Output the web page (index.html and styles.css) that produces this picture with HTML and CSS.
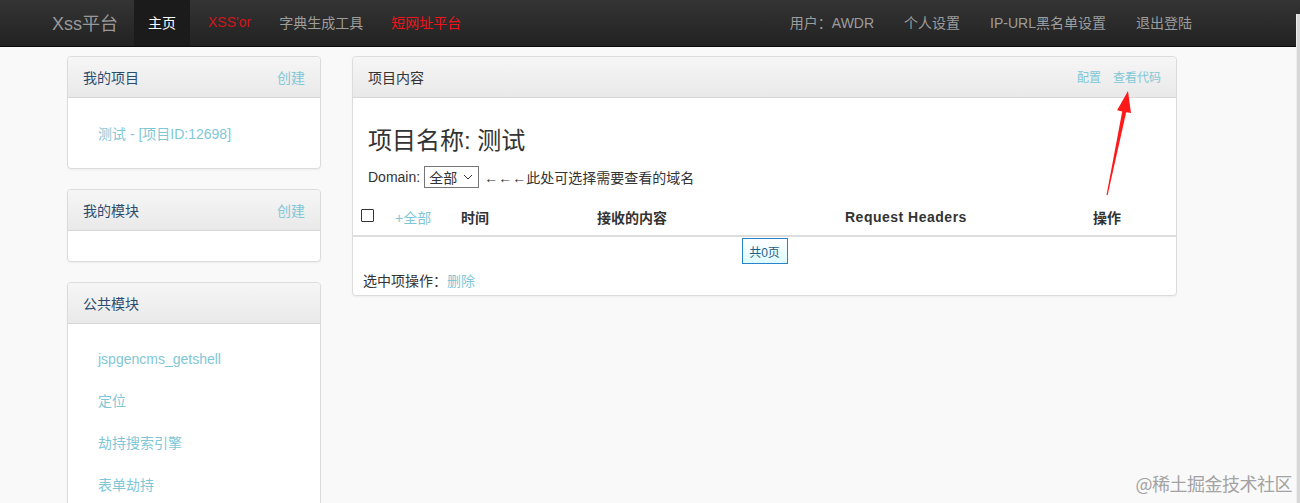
FILE: index.html
```html
<!DOCTYPE html>
<html lang="zh-CN">
<head>
<meta charset="utf-8">
<title>Xss平台</title>
<link rel="stylesheet" href="styles.css">
</head>
<body>
<header class="navbar">
  <div class="nav-left">
    <a class="brand">Xss平台</a>
    <a class="nav-item active">主页</a>
    <a class="nav-item red1">XSS'or</a>
    <a class="nav-item">字典生成工具</a>
    <a class="nav-item red2">短网址平台</a>
  </div>
  <div class="nav-right">
    <a class="nav-item">用户：AWDR</a>
    <a class="nav-item">个人设置</a>
    <a class="nav-item">IP-URL黑名单设置</a>
    <a class="nav-item">退出登陆</a>
  </div>
</header>

<main class="layout">
  <aside class="sidebar">
    <section class="box">
      <div class="box-head"><span class="box-title">我的项目</span><a class="link">创建</a></div>
      <div class="box-body project-list">
        <a class="link">测试 - [项目ID:12698]</a>
      </div>
    </section>
    <section class="box">
      <div class="box-head"><span class="box-title">我的模块</span><a class="link">创建</a></div>
      <div class="box-body empty"></div>
    </section>
    <section class="box">
      <div class="box-head"><span class="box-title">公共模块</span></div>
      <div class="box-body module-list">
        <a class="link">jspgencms_getshell</a>
        <a class="link">定位</a>
        <a class="link">劫持搜索引擎</a>
        <a class="link">表单劫持</a>
      </div>
    </section>
  </aside>

  <section class="panel">
    <div class="panel-head">
      <span class="panel-title">项目内容</span>
      <div class="panel-actions"><a class="link">配置</a><a class="link">查看代码</a></div>
    </div>
    <div class="panel-body">
      <h3 class="project-name">项目名称: 测试</h3>
      <div class="domain-row">
        <span>Domain:</span>
        <span class="select">全部<svg class="caret" width="10" height="6" viewBox="0 0 10 6"><path d="M1 1 L5 5 L9 1" fill="none" stroke="#333" stroke-width="1"/></svg></span>
        <span>←←←此处可选择需要查看的域名</span>
      </div>
      <div class="table-head">
        <div class="cell"><span class="checkbox"></span></div>
        <div class="cell"><a class="link">+全部</a></div>
        <div class="cell th">时间</div>
        <div class="cell th">接收的内容</div>
        <div class="cell th latin">Request Headers</div>
        <div class="cell th">操作</div>
      </div>
      <div class="pager"><span class="page-btn">共0页</span></div>
      <div class="ops">选中项操作：<a class="link">删除</a></div>
    </div>
  </section>
</main>

<svg class="arrow" width="1300" height="503" viewBox="0 0 1300 503">
  <polygon points="1106.5,195 1122.2,111.4 1117.1,110.2 1128,91 1131,113 1126.2,112.3 1107.6,195.2" fill="#ff1a1a"/>
</svg>

<div class="scrollbar"></div>
<div class="watermark">@稀土掘金技术社区</div>
</body>
</html>
```

FILE: styles.css
```css
* { box-sizing: border-box; }
html, body { margin: 0; padding: 0; height: 503px; overflow: hidden; }
body {
  background: #f9f9f9;
  font-family: "Liberation Sans", Arial, "Noto Sans CJK SC", sans-serif;
  font-size: 14px;
  color: #333;
  position: relative;
}
a { text-decoration: none; cursor: pointer; }

.navbar {
  height: 47px;
  background: linear-gradient(#343434, #222);
  border-bottom: 1px solid #0b0b0b;
  display: flex;
  justify-content: space-between;
  align-items: stretch;
}
.nav-left, .nav-right { display: flex; align-items: stretch; }
.nav-left { padding-left: 52px; }
.nav-right { padding-right: 93px; }
.brand {
  color: #999;
  font-size: 18px;
  display: flex;
  align-items: center;
  padding-right: 16px;
  padding-bottom: 2px;
}
.nav-item {
  color: #9d9d9d;
  display: flex;
  align-items: center;
  padding: 0 14px 3px;
  font-size: 14px;
}
.nav-right .nav-item { padding: 0 15px 3px; }
.nav-item.active { background: #1b1b1b; color: #fff; }
.nav-item.red1 { color: #d0161a; padding-left: 18px; }
.nav-item.red2 { color: #f0141a; }

.layout {
  display: flex;
  gap: 31px;
  padding: 9px 0 0 67px;
}
.sidebar {
  width: 254px;
  display: flex;
  flex-direction: column;
  gap: 20px;
}
.box, .panel {
  background: #fff;
  border: 1px solid #dcdcdc;
  border-radius: 4px;
  box-shadow: 0 1px 2px rgba(0,0,0,0.05);
}
.box-head, .panel-head {
  height: 41px;
  background: linear-gradient(#f6f6f6, #e9e9e9);
  border-bottom: 1px solid #d6d6d6;
  border-radius: 4px 4px 0 0;
  display: flex;
  justify-content: space-between;
  align-items: center;
  padding: 0 15px 0 15px;
}
.box-title { color: #2b4c6f; }
.link { color: #7fc7d6; }
.project-list { padding: 25px 30px 26px; height: 70px; }
.empty { height: 30px; }
.module-list {
  padding: 27px 30px 60px;
  display: flex;
  flex-direction: column;
  gap: 25px;
  line-height: 17px;
}

.panel { width: 825px; height: 240px; }
.panel-title { color: #333; }
.panel-actions { display: flex; gap: 12px; font-size: 12px; padding-bottom: 2px; }
.panel-body { padding: 0; }
.project-name {
  margin: 0;
  padding: 28px 15px 0;
  font-size: 24px;
  font-weight: normal;
  line-height: 30px;
}
.domain-row {
  display: flex;
  align-items: center;
  gap: 4px;
  padding: 8px 15px 0;
  height: 33px;
}
.select {
  display: inline-flex;
  align-items: center;
  justify-content: space-between;
  width: 55px;
  height: 22px;
  border: 1px solid #767676;
  padding: 0 5px 0 4px;
  background: #fff;
  margin-right: 1px;
}
.caret { margin-top: 1px; }

.table-head {
  display: grid;
  grid-template-columns: 34px 66px 136px 248px 248px 1fr;
  height: 38px;
  border-bottom: 2px solid #ddd;
  margin-top: 10px;
}
.cell {
  display: flex;
  align-items: center;
  padding-left: 8px;
}
.th { font-weight: bold; color: #333; }
.latin { letter-spacing: 0.5px; }
.checkbox {
  width: 13px;
  height: 13px;
  border: 1px solid #333;
  border-radius: 1px;
  margin-top: -3px;
  background: #fff;
}
.pager {
  display: flex;
  justify-content: center;
  padding: 1px 0 0 0;
  height: 31px;
}
.page-btn {
  display: inline-flex;
  align-items: center;
  justify-content: center;
  width: 46px;
  height: 26px;
  border: 1px solid #2a82c8;
  background: linear-gradient(#ffffff, #ddfcff);
  color: #1e5f8a;
  font-size: 12px;
}
.ops { padding: 2px 10px 0; }

.arrow { position: absolute; left: 0; top: 0; pointer-events: none; }
.scrollbar {
  position: absolute;
  right: 0;
  top: 14px;
  width: 4px;
  height: 489px;
  background: #d8d8d8;
  border-left: 1px solid #eee;
}
.watermark {
  position: absolute;
  right: 8px;
  bottom: 7px;
  font-size: 18px;
  color: #a3a3a3;
  font-family: "Noto Sans CJK SC", sans-serif;
  letter-spacing: -0.5px;
}
```
